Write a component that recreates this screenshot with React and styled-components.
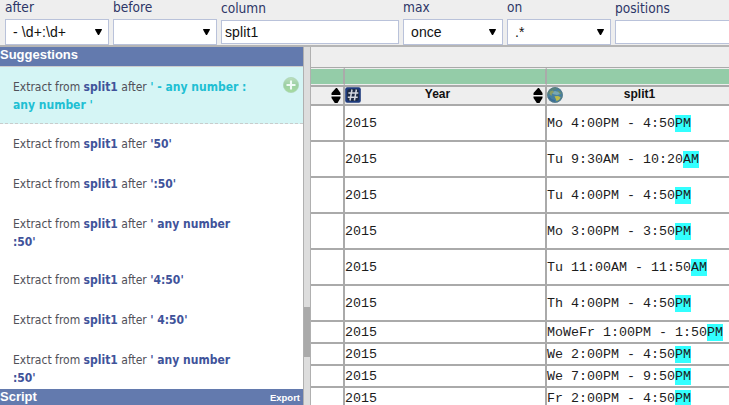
import React from "react";
import styled, { createGlobalStyle } from "styled-components";

const GlobalStyle = createGlobalStyle`
  * { box-sizing: border-box; }
  html, body { margin: 0; overflow: hidden; }
  body { font-family: "Liberation Sans", Arial, sans-serif; background: #fff; }
`;

const Page = styled.div`
  width: 729px;
  height: 405px;
  display: flex;
  flex-direction: column;
  overflow: hidden;
`;

const Toolbar = styled.div`
  display: flex;
  gap: 4px;
  height: 47px;
  flex: none;
  padding-left: 5px;
  background: #eee;
  border-bottom: 2px solid #b5b5b5;
`;

const Field = styled.div`
  width: ${(p) => p.$width}px;
  flex: none;
  padding-top: ${(p) => (p.$input ? 1 : 0)}px;
`;

const Label = styled.div`
  height: 19px;
  line-height: 15px;
  font-family: "DejaVu Sans Condensed", "DejaVu Sans", sans-serif;
  font-stretch: condensed;
  font-size: 13.6px;
  color: #2c3566;
  white-space: nowrap;
`;

const SelectBox = styled.div`
  height: 26px;
  display: flex;
  align-items: center;
  justify-content: space-between;
  padding: 0 6px 0 7px;
  border: 1px solid #b9c2da;
  background: #fff;
  font-size: 14px;
  letter-spacing: 0.1px;
  color: #111;
  white-space: pre;
`;

const InputBox = styled(SelectBox)`
  height: 24px;
  padding: 0 3px;
`;

const Main = styled.div`
  display: flex;
  flex: 1;
  min-height: 0;
`;

const Sidebar = styled.div`
  width: 303px;
  flex: none;
  display: flex;
  flex-direction: column;
`;

const PanelHeader = styled.div`
  height: ${(p) => p.$height}px;
  flex: none;
  display: flex;
  justify-content: space-between;
  background: #637aae;
  color: #fff;
  font-size: 13px;
  font-weight: bold;
  line-height: 15px;
`;

const ExportLink = styled.span`
  font-size: 9.5px;
  line-height: 18px;
  padding-right: 3px;
`;

const List = styled.div`
  flex: 1;
  min-height: 0;
  overflow: hidden;
  border-top: 1px solid #ccc;
`;

const Suggestion = styled.div`
  display: flex;
  justify-content: space-between;
  min-height: 40px;
  padding: 11px 4px 9px 13px;
  line-height: 18px;
  font-family: "DejaVu Sans Condensed", "DejaVu Sans", sans-serif;
  font-stretch: condensed;
  font-size: 12px;
  color: #505058;
  background: ${(p) => (p.$active ? "#d5f5f5" : "#fff")};
  border-bottom: ${(p) => (p.$active ? "1px dashed #c8cccc" : "none")};
`;

const SuggestionText = styled.div`
  white-space: pre;
`;

const Name = styled.b`
  color: #40539a;
`;

const Match = styled.b`
  color: ${(p) => (p.$active ? "#20bfd3" : "#40539a")};
`;

const Splitter = styled.div`
  width: 8px;
  flex: none;
  padding-top: 260px;
  background: #ddd;
  border-left: 1px solid #b0b0b0;
  border-right: 1px solid #b0b0b0;
`;

const Thumb = styled.div`
  height: 50px;
  background: #aaa;
`;

const TablePane = styled.div`
  flex: 1;
  min-width: 0;
  overflow: hidden;
  background: #fff;
`;

const TableStrip = styled.div`
  height: 21px;
  background: #eee;
  border-bottom: 1px solid #aaa;
`;

const Row = styled.div`
  display: grid;
  grid-template-columns: 34px 202px 202px;
  width: 438px;
  height: ${(p) => p.$height}px;
  border-bottom: 2px solid #aaa;
`;

const Cell = styled.div`
  display: flex;
  align-items: center;
  border-right: 2px solid #aaa;
  font-family: "Liberation Mono", "Courier New", monospace;
  font-size: 13.333px;
  line-height: 17px;
  color: #1c1c1c;
  white-space: pre;
`;

const QualityCell = styled(Cell)`
  background: #94cca8;
  border-top: 1px solid #eee;
  border-bottom: 1px solid #eee;
`;

const HeadCell = styled(Cell)`
  background: #eee;
  align-items: flex-start;
  justify-content: flex-end;
  font-family: "Liberation Sans", Arial, sans-serif;
  font-size: 12px;
  font-weight: bold;
  line-height: 14px;
  color: #111;
`;

const TypeIcon = styled.svg`
  width: 16px;
  height: 16px;
  flex: none;
  margin-right: -16px;
`;

const Title = styled.div`
  width: 185px;
  flex: none;
  text-align: center;
`;

const SortSvg = styled.svg`
  width: 15px;
  height: 17px;
  flex: none;
`;

const Highlight = styled.span`
  background: #33ffff;
  height: 17px;
`;

const Arrow = () => (
  <svg width="7" height="6" viewBox="0 0 7 6">
    <path d="M0 0H7L6.5 1.5L4 6H3L.5 1.5Z" fill="#000" />
  </svg>
);

const Sort = () => (
  <SortSvg viewBox="0 0 15 17">
    <path d="M8 1H9L12.5 6V8H3.5V6ZM3.5 9.5H12.5V11L9.5 16H6.8L3.5 11Z" fill="#000" />
  </SortSvg>
);

const NumberIcon = () => (
  <TypeIcon viewBox="0 0 16 16">
    <rect x=".2" y=".2" width="15.6" height="15.6" rx="2" fill="#1d3a7c" />
    <rect x="2" y="2" width="12" height="12" rx="3" fill="#1e2b44" />
    <path d="M7 2.5L5 13.5M11.4 2.5L9.4 13.5M3.4 6H13.3M2.8 10.2H12.7" stroke="#d3d6de" strokeWidth="1.5" fill="none" />
  </TypeIcon>
);

const GlobeIcon = () => (
  <TypeIcon viewBox="0 0 16 16">
    <circle cx="8" cy="8" r="7.8" fill="#477f9e" />
    <path d="M2 3.2Q5 0 9 .5L10 2L6 3.2L3 5.8L1 8L.7 6Z" fill="#5b8579" />
    <path d="M4 5.5L8 4L12 5L13.5 7L10 8L6.5 7.2Z" fill="#78a7b3" />
    <path d="M3 4.5L6 3.5L7 5L5 6.6L4.5 9L2.5 7Z" fill="#8b9c61" />
    <path d="M7.5 9.2L11 9L13.7 10.3L12 13L9.5 14L8.7 11.7Z" fill="#bcba49" />
    <path d="M10 3L13 4.4L14.5 7L12.4 6.5Z" fill="#6e9166" />
    <path d="M1.5 10Q4 13.6 8 14" fill="none" stroke="#3a6d98" strokeWidth="1.6" />
    <circle cx="8" cy="8" r="7.4" fill="none" stroke="#587a80" strokeWidth=".8" />
  </TypeIcon>
);

const AddSvg = styled.svg`
  width: 16px;
  height: 16px;
  flex: none;
  margin-top: -1px;
`;

const AddIcon = () => (
  <AddSvg viewBox="0 0 16 16">
    <defs>
      <linearGradient id="add" x1="0" y1="0" x2="0" y2="1">
        <stop offset="0" stopColor="#bcdfbf" />
        <stop offset="0.5" stopColor="#9ccfa3" />
        <stop offset="1" stopColor="#a5dc9f" />
      </linearGradient>
    </defs>
    <circle cx="8" cy="8" r="7.6" fill="url(#add)" stroke="#a9d3b2" strokeWidth=".7" />
    <path d="M8 3.5V12.5M3.5 8H12.5" stroke="#f0fbf7" strokeWidth="2.1" />
  </AddSvg>
);

const fields = [
  { label: "after", value: "- \\d+:\\d+", width: 104 },
  { label: "before", value: "", width: 104 },
  { label: "column", value: "split1", width: 178, input: true },
  { label: "max", value: "once", width: 100 },
  { label: "on", value: ".*", width: 104 },
  { label: "positions", value: "", width: 178, input: true },
];

const suggestions = [
  ["' - any number :", "any number '"],
  ["'50'"],
  ["':50'"],
  ["' any number", ":50'"],
  ["'4:50'"],
  ["' 4:50'"],
  ["' any number", ":50'"],
];

const rows = [
  ["Mo 4:00PM - 4:50", "PM", 36],
  ["Tu 9:30AM - 10:20", "AM", 36],
  ["Tu 4:00PM - 4:50", "PM", 36],
  ["Mo 3:00PM - 3:50", "PM", 36],
  ["Tu 11:00AM - 11:50", "AM", 36],
  ["Th 4:00PM - 4:50", "PM", 36],
  ["MoWeFr 1:00PM - 1:50", "PM", 22],
  ["We 2:00PM - 4:50", "PM", 22],
  ["We 7:00PM - 9:50", "PM", 22],
  ["Fr 2:00PM - 4:50", "PM", 22],
];

export default function App() {
  return (
    <Page>
      <GlobalStyle />
      <Toolbar>
        {fields.map((f) => (
          <Field key={f.label} $width={f.width} $input={f.input}>
            <Label>{f.label}</Label>
            {f.input ? (
              <InputBox>{f.value}</InputBox>
            ) : (
              <SelectBox>
                <span>{f.value}</span>
                <Arrow />
              </SelectBox>
            )}
          </Field>
        ))}
      </Toolbar>
      <Main>
        <Sidebar>
          <PanelHeader $height={19}>Suggestions</PanelHeader>
          <List>
            {suggestions.map(([first, second], i) => (
              <Suggestion key={i} $active={i === 0}>
                <SuggestionText>
                  <div>
                    Extract from <Name>split1</Name> after <Match $active={i === 0}>{first}</Match>
                  </div>
                  {second && (
                    <div>
                      <Match $active={i === 0}>{second}</Match>
                    </div>
                  )}
                </SuggestionText>
                {i === 0 && <AddIcon />}
              </Suggestion>
            ))}
          </List>
          <PanelHeader $height={16}>
            Script<ExportLink>Export</ExportLink>
          </PanelHeader>
        </Sidebar>
        <Splitter>
          <Thumb />
        </Splitter>
        <TablePane>
          <TableStrip />
          <Row $height={19}>
            <QualityCell />
            <QualityCell />
            <QualityCell />
          </Row>
          <Row $height={19}>
            <HeadCell>
              <Sort />
            </HeadCell>
            <HeadCell>
              <NumberIcon />
              <Title>Year</Title>
              <Sort />
            </HeadCell>
            <HeadCell>
              <GlobeIcon />
              <Title>split1</Title>
              <Sort />
            </HeadCell>
          </Row>
          {rows.map(([text, suffix, height]) => (
            <Row key={text} $height={height}>
              <Cell />
              <Cell>2015</Cell>
              <Cell>
                {text}
                <Highlight>{suffix}</Highlight>
              </Cell>
            </Row>
          ))}
        </TablePane>
      </Main>
    </Page>
  );
}
